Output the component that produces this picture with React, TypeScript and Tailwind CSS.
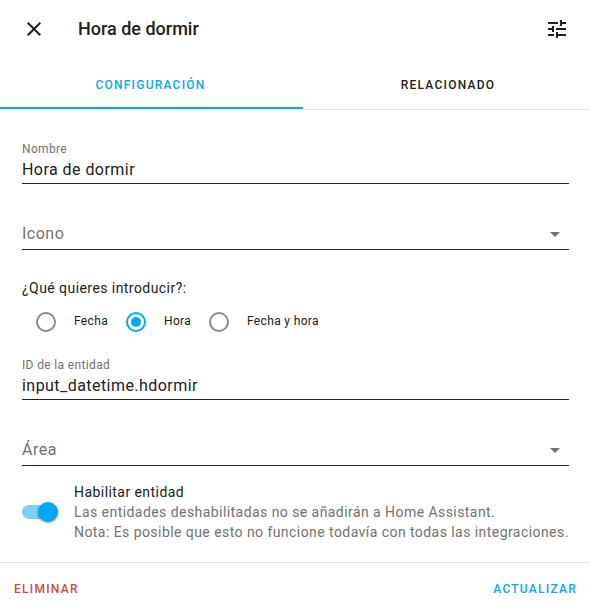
import React from "react";

function Field({ label, value, className = "" }: { label: string; value: string; className?: string }) {
  return (
    <div className={"ml-[22px] mr-5 flex flex-col border-b border-[#212121] " + className}>
      <span className="h-4 text-[12px] leading-4 tracking-[0.35px] text-[#727272]">{label}</span>
      <span className="h-[26px] text-[16px] leading-[26px] tracking-[0.45px] text-[#212121]">{value}</span>
    </div>
  );
}

function Select({ label, className = "" }: { label: string; className?: string }) {
  return (
    <div className={"ml-[22px] mr-5 flex h-[34px] items-start justify-between border-b border-[#212121] " + className}>
      <span className="text-[16px] leading-[36px] tracking-[0.5px] text-[#727272]">{label}</span>
      <svg className="mr-[9px] mt-4 h-[5px] w-[10px]" viewBox="0 0 10 5" fill="#727272"><path d="M0 0h10L5 5z" /></svg>
    </div>
  );
}

function Radio({ checked = false }: { checked?: boolean }) {
  return (
    <svg className="h-5 w-5 shrink-0" viewBox="0 0 20 20" fill="none">
      <circle cx="10" cy="10" r="9" strokeWidth="2" stroke={checked ? "#03a9f4" : "#8a8a8a"} />
      {checked && <circle cx="10" cy="10" r="5" fill="#03a9f4" />}
    </svg>
  );
}

export default function App() {
  return (
    <div className="flex h-[610px] w-[589px] flex-col overflow-hidden whitespace-nowrap bg-white font-['Roboto',sans-serif] text-[#212121]">
      <header className="flex h-[61px] shrink-0 items-start pl-[22px] pr-5 pt-[17px]">
        <svg className="h-6 w-6" viewBox="0 0 24 24" fill="#212121"><path d="M19 6.41 17.59 5 12 10.59 6.41 5 5 6.41 10.59 12 5 17.59 6.41 19 12 13.41 17.59 19 19 17.59 13.41 12z" /></svg>
        <h1 className="ml-8 flex-1 text-[18px] font-medium leading-6">Hora de dormir</h1>
        <svg className="h-6 w-6" viewBox="0 0 24 24" fill="#212121"><path d="M3 17v2h6v-2H3zM3 5v2h10V5H3zm10 16v-2h8v-2h-8v-2h-2v6h2zM7 9v2H3v2h4v2h2V9H7zm14 4v-2H11v2h10zm-6-4h2V7h4V5h-4V3h-2v6z" /></svg>
      </header>
      <nav className="flex h-[49px] shrink-0 border-b border-[#e0e0e0] text-[12px] font-medium leading-[48px] tracking-[1.24px]">
        <div className="h-12 w-[303px] border-b-2 border-[#03a9f4] pr-[2px] text-center text-[#03a9f4]">CONFIGURACIÓN</div>
        <div className="flex-1 pl-1 text-center">RELACIONADO</div>
      </nav>
      <main className="flex h-[452px] shrink-0 flex-col">
        <Field label="Nombre" value="Hora de dormir" className="mt-[31px]" />
        <Select label="Icono" className="mt-8" />
        <p className="ml-[22px] mt-[28px] text-[14px] leading-5 tracking-[0.44px]">¿Qué quieres introducir?:</p>
        <div className="ml-9 mt-[14px] flex h-5 items-center text-[12px] tracking-[0.35px]">
          <Radio /><span className="ml-[18px] w-[52px] pb-0.5">Fecha</span>
          <Radio checked /><span className="ml-[18px] w-[45px] pb-0.5">Hora</span>
          <Radio /><span className="ml-[18px] pb-0.5">Fecha y hora</span>
        </div>
        <Field label="ID de la entidad" value="input_datetime.hdormir" className="mt-[25px]" />
        <Select label="Área" className="mt-8" />
        <div className="ml-[22px] mt-4 flex">
          <div className="mt-5 flex h-[20px] w-9 items-center">
            <div className="flex h-[14px] w-9 items-center justify-end rounded-full bg-[#7bd1f9]"><div className="h-5 w-5 shrink-0 rounded-full bg-[#03a9f4] shadow-[0_1px_3px_rgba(0,0,0,0.4)]" /></div>
          </div>
          <div className="ml-4 text-[14px] leading-5 tracking-[0.44px]">
            <div>Habilitar entidad</div>
            <div className="text-[#727272]">Las entidades deshabilitadas no se añadirán a Home Assistant.</div>
            <div className="text-[#727272]">Nota: Es posible que esto no funcione todavía con todas las integraciones.</div>
          </div>
        </div>
      </main>
      <footer className="flex h-12 shrink-0 items-center justify-between border-t border-[#e0e0e0] pl-[14px] pr-3 pt-1 text-[12px] font-medium tracking-[1.25px]">
        <button className="text-[#db4437]">ELIMINAR</button>
        <button className="text-[#03a9f4]">ACTUALIZAR</button>
      </footer>
    </div>
  );
}
